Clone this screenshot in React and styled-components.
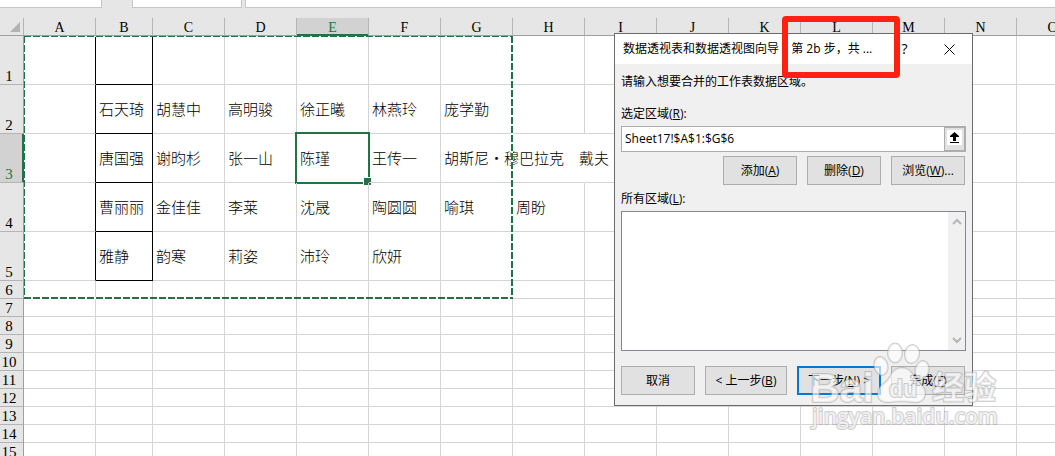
import React from "react";
import styled, { createGlobalStyle, css } from "styled-components";

const GREEN = "#217346";

// one entry per column: letter and width
const columns = "ABCDEFGHIJKLMNOPQRSTUVWXYZ".split("").map((name) => ({
  name,
  width: name === "B" ? 57 : 72,
}));

const cells = {
  B2: "石天琦", C2: "胡慧中", D2: "高明骏", E2: "徐正曦", F2: "林燕玲", G2: "庞学勤",
  B3: "唐国强", C3: "谢昀杉", D3: "张一山", E3: "陈瑾", F3: "王传一", G3: "胡斯尼·穆巴拉克　戴夫",
  B4: "曹丽丽", C4: "金佳佳", D4: "李莱", E4: "沈晟", F4: "陶圆圆", G4: "喻琪", H4: "周盼",
  B5: "雅静", C5: "韵寒", D5: "莉姿", E5: "沛玲", F5: "欣妍",
};

const active = { col: "E", row: 3 };

// only as many rows and columns as the window can show
function useVisible() {
  const count = () => ({
    cols: Math.ceil((window.innerWidth - 9) / 72),
    rows: 5 + Math.ceil((window.innerHeight - 281) / 18),
  });
  const [visible, setVisible] = React.useState(count);
  React.useEffect(() => {
    const onResize = () => setVisible(count());
    window.addEventListener("resize", onResize);
    return () => window.removeEventListener("resize", onResize);
  }, []);
  return visible;
}

function Sheet() {
  const visible = useVisible();
  const cols = columns.slice(0, visible.cols);
  const rows = Array.from({ length: visible.rows }, (_, i) => i + 1);
  return (
    <SheetArea>
      <Grid>
        <colgroup>
          <Col $width={24} />
          {cols.map((c) => <Col key={c.name} $width={c.width} />)}
        </colgroup>
        <thead>
          <tr>
            <Corner aria-label="全选">
              <svg width="10" height="10" viewBox="0 0 10 10">
                <path d="M10 0V10H0Z" fill="#b2b2b2" />
              </svg>
            </Corner>
            {cols.map((c) => (
              <ColHead key={c.name} scope="col" $active={c.name === active.col}>{c.name}</ColHead>
            ))}
          </tr>
        </thead>
        <tbody>
          {rows.map((r) => (
            <tr key={r}>
              <RowHead scope="row" $tall={r < 6} $active={r === active.row}>{r}</RowHead>
              {cols.map((c) => {
                const id = c.name + r;
                const boxed = r < 6;
                return (
                  <Cell
                    key={id}
                    $blackRight={boxed && (c.name === "A" || c.name === "B")}
                    $blackBottom={boxed && c.name === "B"}
                    $open={id === "G3" || id === "H3"}
                    $active={c.name === active.col && r === active.row}
                  >
                    {cells[id]}
                  </Cell>
                );
              })}
            </tr>
          ))}
        </tbody>
      </Grid>
      <CopyRange />
    </SheetArea>
  );
}

function Wizard() {
  return (
    <Dialog role="dialog" aria-labelledby="wizard-title">
      <TitleBar>
        <DialogTitle id="wizard-title">数据透视表和数据透视图向导 – 第 2b 步，共 ...</DialogTitle>
        <TitleButton aria-label="帮助">?</TitleButton>
        <TitleButton aria-label="关闭">
          <svg width="11" height="11" viewBox="0 0 11 11">
            <path d="M0.5 0.5L10.5 10.5M10.5 0.5L0.5 10.5" stroke="#000" fill="none" />
          </svg>
        </TitleButton>
      </TitleBar>
      <DialogBody>
        <Hint>请输入想要合并的工作表数据区域。</Hint>
        <Label htmlFor="range">选定区域(<u>R</u>):</Label>
        <RangeField>
          <RangeInput id="range" defaultValue="Sheet17!$A$1:$G$6" spellCheck={false} />
          <PickButton aria-label="折叠对话框">
            <svg width="15" height="15" viewBox="0 0 15 15">
              <rect width="15" height="15" fill="#fff" />
              <path d="M7.5 2L12 6V7H9V11H6V7H3V6Z" fill="#000" />
              <path d="M3 12.5H12" stroke="#000" />
            </svg>
          </PickButton>
        </RangeField>
        <EditRow>
          <Button>添加(<u>A</u>)</Button>
          <Button>删除(<u>D</u>)</Button>
          <Button>浏览(<u>W</u>)...</Button>
        </EditRow>
        <Label htmlFor="ranges">所有区域(<u>L</u>):</Label>
        <ListFrame>
          <RangeList id="ranges" multiple />
          <ScrollTrack>
            <Chevron d="M1 6L5 2L9 6" />
            <Chevron d="M1 2L5 6L9 2" />
          </ScrollTrack>
        </ListFrame>
        <StepRow>
          <Button>取消</Button>
          <Button $width={82}>&lt; 上一步(<u>B</u>)</Button>
          <Button $width={84} $primary>下一步(<u>N</u>) &gt;</Button>
          <Button>完成(<u>F</u>)</Button>
        </StepRow>
      </DialogBody>
      <RedFrame />
    </Dialog>
  );
}

function Chevron({ d }) {
  return (
    <svg width="10" height="8" viewBox="0 0 10 8">
      <path d={d} stroke="#b5b5b5" strokeWidth="2" fill="none" />
    </svg>
  );
}

function Watermark() {
  return (
    <Mark viewBox="0 0 200 100" width="200" height="100" aria-label="Baidu 经验">
      <g fill="#fff" fillOpacity="0.65" stroke="#a0a0a0" strokeOpacity="0.5" strokeWidth="2" strokeLinejoin="round" paintOrder="stroke">
        <text x="6" y="62" fontFamily="Liberation Sans, sans-serif" fontWeight="700" fontSize="41">Bai</text>
        <ellipse cx="77" cy="26" rx="6.5" ry="9" transform="rotate(-14 77 26)" />
        <ellipse cx="91" cy="13" rx="7" ry="9.5" />
        <ellipse cx="108" cy="14" rx="7" ry="9" transform="rotate(10 108 14)" />
        <ellipse cx="118" cy="30" rx="6.5" ry="9" transform="rotate(14 118 30)" />
        <path d="M98 28C91 28 88 32 86 37C83 43 74 45 74 54C74 60 79 63 86 62C94 61 102 61 109 62C116 63 121 60 121 53C121 45 113 43 110 37C107 31 104 28 98 28Z" />
        <text x="85" y="57" fontFamily="Liberation Sans, sans-serif" fontWeight="700" fontSize="23">du</text>
        <text x="128" y="59" fontFamily="Noto Sans CJK SC, sans-serif" fontWeight="700" fontSize="32">经验</text>
        <text x="8" y="84" fontFamily="Open Sans, sans-serif" fontWeight="600" fontSize="21">jingyan.baidu.com</text>
      </g>
    </Mark>
  );
}

function App() {
  return (
    <Page>
      <GlobalStyle />
      <FormulaBar>
        <BarBox $width={102} />
        <BarBox $width={110} />
        <BarBox $grow />
      </FormulaBar>
      <Sheet />
      <Wizard />
      <Watermark />
    </Page>
  );
}

const GlobalStyle = createGlobalStyle`
* {
    box-sizing: border-box;
}
body {
    margin: 0;
    overflow: hidden;
    background: #fff;
}
`;

const Page = styled.main`
position: relative;
display: flex;
flex-direction: column;
height: 100vh;
overflow: hidden;
color: #000;
`;

const FormulaBar = styled.div`
flex: none;
display: flex;
align-items: flex-start;
height: 18px;
background: #e6e6e6;
`;

const BarBox = styled.div`
width: ${(p) => (p.$grow ? "auto" : p.$width + "px")};
flex: ${(p) => (p.$grow ? "1" : "none")};
height: 8px;
background: #fff;
border: 1px solid #c6c6c6;
border-top: 0;

&:first-child {
    border-left: 0;
    margin-right: 30px;
}
&:last-child {
    border-right: 0;
    margin-left: 3px;
}
`;

const SheetArea = styled.div`
position: relative;
flex: 1;
min-height: 0;
overflow: hidden;
`;

const Grid = styled.table`
table-layout: fixed;
width: 0;
border-spacing: 0;
font-family: "Liberation Serif", serif;
font-size: 15px;
line-height: 16px;

& th, & td {
    padding: 0;
    font-weight: normal;
}
`;

const Col = styled.col`
width: ${(p) => p.$width}px;
`;

const Corner = styled.th`
height: 18px;
background: #e6e6e6;
border-right: 1px solid #b4b4b4;
border-bottom: 1px solid #9f9f9f;
text-align: right;

& svg {
    display: block;
    margin: 0 3px 0 auto;
}
`;

const ColHead = styled.th`
height: 18px;
text-align: center;
vertical-align: top;
background: ${(p) => (p.$active ? "#d2d2d2" : "#e6e6e6")};
color: ${(p) => (p.$active ? GREEN : "#000")};
border-right: 1px solid #b4b4b4;
border-bottom: 1px solid ${(p) => (p.$active ? GREEN : "#9f9f9f")};
box-shadow: ${(p) => (p.$active ? "inset 0 -1px " + GREEN : "none")};
font-size: 14px;
line-height: 15px;

&& {
    padding-top: 2px;
}
`;

const RowHead = styled.th`
height: ${(p) => (p.$tall ? 49 : 18)}px;
vertical-align: bottom;
text-align: center;
background: ${(p) => (p.$active ? "#d2d2d2" : "#e6e6e6")};
color: ${(p) => (p.$active ? GREEN : "#000")};
border-right: 1px solid ${(p) => (p.$active ? GREEN : "#9f9f9f")};
border-bottom: 1px solid #b4b4b4;
box-shadow: ${(p) => (p.$active ? "inset -1px 0 " + GREEN : "none")};
line-height: 15px;

&& {
    padding-right: 5px;
}
`;

const Cell = styled.td`
position: relative;
vertical-align: middle;
white-space: nowrap;
font-family: "Noto Sans CJK SC", sans-serif;
border-right: 1px solid ${(p) => (p.$blackRight ? "#000" : p.$open ? "transparent" : "#d4d4d4")};
border-bottom: 1px solid ${(p) => (p.$blackBottom ? "#000" : "#d4d4d4")};

&& {
    padding-left: 3px;
    font-weight: 300;
}

${(p) => p.$active && css`
&::before {
    content: "";
    position: absolute;
    inset: -2px;
    border: 2px solid ${GREEN};
}
&::after {
    content: "";
    position: absolute;
    right: -4px;
    bottom: -4px;
    width: 7px;
    height: 7px;
    background: ${GREEN};
    border: 1px solid #fff;
}
`}
`;

// dashed frame round A1:G6
const dash = (dir) => `repeating-linear-gradient(${dir}, ${GREEN} 0 7px, #fff 7px 9px)`;

const CopyRange = styled.div`
position: absolute;
left: 24px;
top: 18px;
width: 489px;
height: 263px;
pointer-events: none;
background:
    ${dash("to right")} top / 100% 1px no-repeat,
    ${dash("to right")} bottom / 100% 2px no-repeat,
    ${dash("to bottom")} left / 1px 100% no-repeat,
    ${dash("to bottom")} right / 2px 100% no-repeat;
`;

const Dialog = styled.section`
position: absolute;
left: 614px;
top: 33px;
width: 359px;
background: #f0f0f0;
border: 1px solid #6b6b6b;
font-family: "Open Sans", "Noto Sans CJK SC", sans-serif;
font-size: 12px;
line-height: 16px;

& button, & input {
    font: inherit;
    color: inherit;
}
`;

const TitleBar = styled.header`
display: flex;
align-items: center;
height: 30px;
padding-left: 8px;
background: #fff;
`;

const DialogTitle = styled.h1`
flex: 1;
margin: 0;
font-size: 12px;
font-weight: normal;
white-space: nowrap;
`;

const TitleButton = styled.button`
display: flex;
align-items: center;
justify-content: center;
width: 45px;
height: 30px;
padding: 0;
border: 0;
background: none;

&& {
    font-size: 14px;
}
`;

const DialogBody = styled.div`
display: flex;
flex-direction: column;
padding: 10px 6px;
`;

const Hint = styled.p`
margin: 0 0 16px;
`;

const Label = styled.label`
margin-bottom: 4px;
`;

const RangeField = styled.div`
display: flex;
height: 26px;
background: #fff;
border: 1px solid #abadb3;
`;

const RangeInput = styled.input`
flex: 1;
min-width: 0;
padding: 0 3px;
border: 0;
outline: none;
background: none;
`;

const PickButton = styled.button`
display: flex;
justify-content: center;
width: 21px;
padding: 2px 0 0;
background: #e1e1e1;
border: 1px solid #adadad;
`;

const Button = styled.button`
width: ${(p) => p.$width || 74}px;
height: 29px;
padding: 0;
white-space: nowrap;
background: #e1e1e1;
border: ${(p) => (p.$primary ? "2px solid #0078d7" : "1px solid #adadad")};
`;

const EditRow = styled.div`
display: flex;
justify-content: flex-end;
gap: 10px;
margin: 4px 1px 6px 0;
`;

const ListFrame = styled.div`
display: flex;
height: 140px;
background: #fff;
border: 1px solid #828790;
`;

const RangeList = styled.select`
flex: 1;
border: 0;
outline: none;
background: none;
`;

const ScrollTrack = styled.div`
display: flex;
flex-direction: column;
justify-content: space-between;
align-items: center;
width: 17px;
padding: 6px 0;
background: #f0f0f0;
`;

const StepRow = styled.div`
display: flex;
gap: 10px;
margin-top: 15px;
`;

const RedFrame = styled.div`
position: absolute;
left: 167px;
top: -18px;
width: 118px;
height: 62px;
border: 6px solid #ff2213;
border-radius: 4px;
pointer-events: none;
`;

const Mark = styled.svg`
position: absolute;
left: 804px;
top: 340px;
pointer-events: none;
`;

export default App;
